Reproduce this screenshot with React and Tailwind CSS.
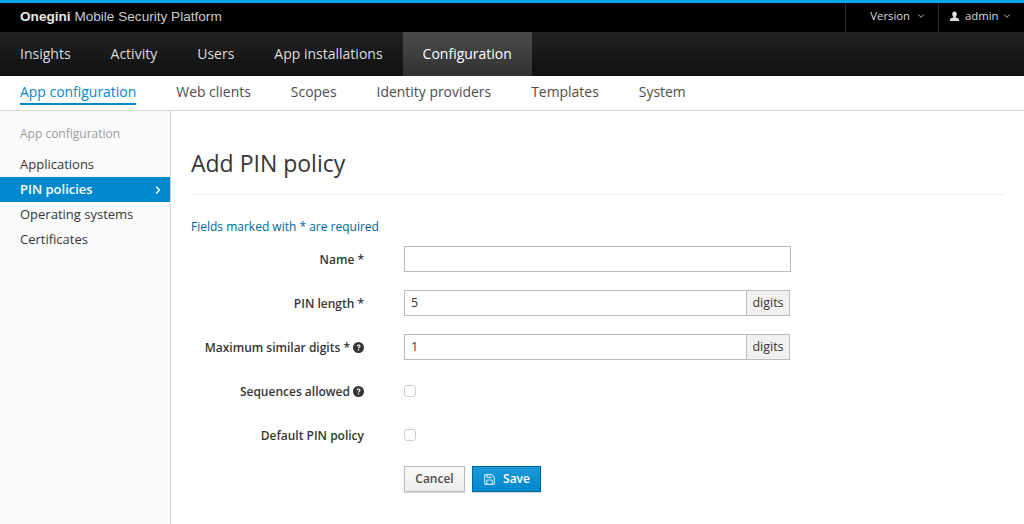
import React from "react";
import { ChevronDown, ChevronRight, Save } from "lucide-react";

const mainNav = ["Insights", "Activity", "Users", "App installations", "Configuration"];
const subNav = ["App configuration", "Web clients", "Scopes", "Identity providers", "Templates", "System"];
const sideNav = ["Applications", "PIN policies", "Operating systems", "Certificates"];

function HelpIcon() {
  return (
    <svg viewBox="0 0 16 16" className="w-[11px] h-[11px] shrink-0">
      <circle cx="8" cy="8" r="8" fill="#333" />
      <path d="M5.2 6.2C5.3 4.6 6.5 3.6 8.1 3.6c1.6 0 2.8 1 2.8 2.4 0 1.1-.6 1.6-1.3 2.1-.6.4-.8.6-.8 1.2v.3H7.1v-.5c0-1 .4-1.5 1.1-2 .5-.4.8-.6.8-1.1 0-.5-.4-.8-.9-.8-.6 0-1 .4-1.1 1z" fill="#fff" />
      <rect x="7.1" y="10.6" width="1.8" height="1.8" fill="#fff" />
    </svg>
  );
}

function UserIcon() {
  return (
    <svg viewBox="0 0 12 12" className="w-[11px] h-[11px]">
      <path d="M6 0.5c1.6 0 2.5 1.2 2.5 2.8 0 1.2-.5 2.3-1.2 2.9v1c1.4.5 3.7 1 3.7 2.4v1.4H1V9.6c0-1.4 2.3-1.9 3.7-2.4v-1C4 5.6 3.5 4.5 3.5 3.3 3.5 1.7 4.4.5 6 .5z" fill="#ddd" />
    </svg>
  );
}

function Row({ label, help, children }) {
  return (
    <div className="flex items-center h-[26px]">
      <div className="w-[173px] pt-[1px] flex items-center justify-end gap-[3px] font-semibold text-[12px] text-[#363636]">
        <span>{label}</span>
        {help && <HelpIcon />}
      </div>
      <div className="ml-[40px] flex">{children}</div>
    </div>
  );
}

function TextInput({ value, wide }) {
  return (
    <div className={`h-[26px] border border-[#bbb] bg-white flex items-center px-[6px] text-[12.5px] text-[#363636] ${wide ? "w-[387px]" : "w-[343px]"}`}>
      {value}
    </div>
  );
}

function Digits() {
  return (
    <div className="h-[26px] w-[43px] border border-l-0 border-[#bbb] bg-[#f0f0f0] flex items-center justify-center text-[12.5px] text-[#363636]">
      digits
    </div>
  );
}

function Check() {
  return <div className="my-[7px] w-[12px] h-[12px] rounded-[3px] border border-[#ccc] bg-white" />;
}

export default function App() {
  return (
    <div className="w-[1024px] h-[524px] overflow-hidden flex flex-col bg-white font-['Open_Sans',sans-serif]">
      {/* top bar */}
      <div className="h-[32px] shrink-0 bg-black border-t-[3px] border-[#0ba5e6] flex items-center justify-between pl-[20px]">
        <div className="text-[13.6px] text-[#ccc] font-['Liberation_Sans',sans-serif]">
          <span className="font-bold text-[#e8e8e8]">Onegini</span> Mobile Security Platform
        </div>
        <div className="flex h-full text-[11.3px] text-[#ddd]">
          <div className="w-[93px] border-l border-[#2a2a2a] flex items-center justify-end pb-[3px] pr-[12px] gap-[6px]">
            Version <ChevronDown size={10} strokeWidth={2} />
          </div>
          <div className="w-[86px] border-l border-[#2a2a2a] flex items-center pb-[3px] pl-[10px] pr-[12px] justify-between">
            <span className="flex items-center gap-[5px]"><UserIcon /> admin</span>
            <ChevronDown size={10} strokeWidth={2} />
          </div>
        </div>
      </div>

      {/* main nav */}
      <div className="h-[44px] shrink-0 bg-gradient-to-b from-[#222] to-[#101010] flex text-[14px] text-[#ddd]">
        {mainNav.map((item) => (
          <div
            key={item}
            className={`flex items-center px-[20px] pb-[2px] ${item === "Configuration" ? "bg-gradient-to-b from-[#4a4a4a] to-[#333] text-white" : ""}`}
          >
            {item}
          </div>
        ))}
      </div>

      {/* sub nav */}
      <div className="h-[35px] shrink-0 border-b border-[#d4d4d4] flex pl-[20px] gap-[40px] text-[13.95px] text-[#4d4d4d]">
        {subNav.map((item, i) => (
          <div key={item} className={`h-[29px] flex items-center ${i === 0 ? "pt-[3px]" : "pt-[3px]"}`}>
            <span className={i === 0 ? "text-[#0088ce] border-b-2 border-[#0088ce] h-[26px] pt-[2px] flex items-center" : ""}>{item}</span>
          </div>
        ))}
      </div>

      <div className="flex-1 flex min-h-0">
        {/* sidebar */}
        <div className="w-[171px] shrink-0 bg-[#fafafa] border-r border-[#d4d4d4] pt-[14px] text-[13px] text-[#363636]">
          <div className="pl-[20px] h-[18px] mb-[9px] flex items-center text-[12px] text-[#9c9c9c]">App configuration</div>
          {sideNav.map((item) => (
            <div
              key={item}
              className={`h-[25px] pl-[20px] pr-[6px] flex items-center justify-between ${item === "PIN policies" ? "bg-[#0088ce] text-white font-semibold" : ""}`}
            >
              {item}
              {item === "PIN policies" && <ChevronRight size={12} strokeWidth={3} />}
            </div>
          ))}
        </div>

        {/* content */}
        <div className="flex-1 pl-[20px] pr-[20px] pt-[37px]">
          <h1 className="text-[23px] leading-[30px] text-[#363636] pb-[16px] border-b border-[#eee]">Add PIN policy</h1>
          <div className="mt-[24px] text-[12px] leading-[16px] text-[#00659c]">Fields marked with * are required</div>
          <div className="mt-[11px] flex flex-col gap-[18px]">
            <Row label="Name *"><TextInput wide /></Row>
            <Row label="PIN length *"><TextInput value="5" /><Digits /></Row>
            <Row label="Maximum similar digits *" help><TextInput value="1" /><Digits /></Row>
            <Row label="Sequences allowed" help><Check /></Row>
            <Row label="Default PIN policy"><Check /></Row>
          </div>
          <div className="mt-[18px] ml-[213px] flex gap-[7px] text-[12px] font-semibold">
            <button className="h-[26px] w-[61px] border border-[#bbb] bg-gradient-to-b from-[#fafafa] to-[#ededed] text-[#4d4d4d] shadow-[0_1px_1px_rgba(0,0,0,0.15)]">Cancel</button>
            <button className="h-[26px] w-[69px] border border-[#00659c] bg-gradient-to-b from-[#1a9ad9] to-[#0088ce] text-white flex items-center justify-center gap-[7px] shadow-[0_1px_1px_rgba(0,0,0,0.15)]">
              <Save size={13} strokeWidth={2} className="text-[#d5eaf6]" /> Save
            </button>
          </div>
        </div>
      </div>
    </div>
  );
}
